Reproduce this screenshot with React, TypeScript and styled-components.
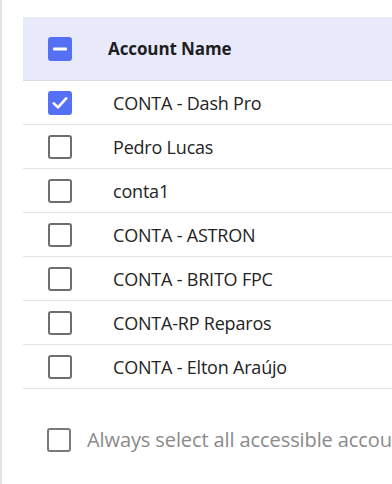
import React from "react";
import styled, { createGlobalStyle } from "styled-components";

const Global = createGlobalStyle`
  html, body { margin: 0; padding: 0; background: #ffffff; }
  body { font-family: "Open Sans", "Noto Sans", sans-serif; }
  * { box-sizing: border-box; }
`;

const Panel = styled.div`
  width: 392px;
  height: 484px;
  overflow: hidden;
  border-left: 2px solid #e4e4e4;
  padding: 17px 0 0 21px;
  background: #fff;
`;

const Table = styled.div`
  display: flex;
  flex-direction: column;
  width: 420px;
`;

const HeaderRow = styled.div`
  display: flex;
  align-items: center;
  height: 64px;
  background: #e8eafc;
  border-bottom: 1px solid #dcdde6;
`;

const Row = styled.div`
  display: flex;
  align-items: center;
  height: 44px;
  border-bottom: 1px solid #e2e2e2;
`;

const BoxCell = styled.div`
  width: 85px;
  flex-shrink: 0;
  padding-left: 25px;
  display: flex;
  align-items: center;
`;

const HeaderText = styled.div`
  font-size: 17px;
  font-weight: 700;
  color: #1f1f1f;
  letter-spacing: -0.1px;
`;

const NameText = styled.div`
  padding-left: 5px;
  font-size: 18px;
  color: #242424;
  white-space: nowrap;
  letter-spacing: -0.2px;
`;

const Box = styled.div<{ $on?: boolean; $muted?: boolean }>`
  width: 24px;
  height: 24px;
  flex-shrink: 0;
  border-radius: 3px;
  display: flex;
  align-items: center;
  justify-content: center;
  background: ${(p) => (p.$on ? "#5670f5" : "#fff")};
  border: ${(p) => (p.$on ? "none" : `2px solid ${p.$muted ? "#7a7a7a" : "#6e6e6e"}`)};
`;

const Footer = styled.div`
  display: flex;
  align-items: center;
  gap: 16px;
  margin-top: 37px;
  padding-left: 24px;
  white-space: nowrap;
`;

const FooterText = styled.div`
  font-size: 20px;
  color: #8a8a8a;
  letter-spacing: -0.1px;
`;

const Dash = () => (
  <svg width="14" height="4" viewBox="0 0 14 4">
    <rect x="0" y="0.5" width="14" height="3" rx="1" fill="#fff" />
  </svg>
);

const Check = () => (
  <svg width="16" height="14" viewBox="0 0 16 14">
    <path d="M1.8 7.4 L6 11.4 L14.2 2.4" fill="none" stroke="#fff" strokeWidth="2.6" strokeLinecap="round" strokeLinejoin="round" />
  </svg>
);

const accounts = [
  { name: "CONTA - Dash Pro", on: true },
  { name: "Pedro Lucas", on: false },
  { name: "conta1", on: false },
  { name: "CONTA - ASTRON", on: false },
  { name: "CONTA - BRITO FPC", on: false },
  { name: "CONTA-RP Reparos", on: false },
  { name: "CONTA - Elton Araújo", on: false },
];

export default function App() {
  return (
    <>
      <Global />
      <Panel>
        <Table>
          <HeaderRow>
            <BoxCell>
              <Box $on>
                <Dash />
              </Box>
            </BoxCell>
            <HeaderText>Account Name</HeaderText>
          </HeaderRow>
          {accounts.map((a) => (
            <Row key={a.name}>
              <BoxCell>
                <Box $on={a.on}>{a.on && <Check />}</Box>
              </BoxCell>
              <NameText>{a.name}</NameText>
            </Row>
          ))}
        </Table>
        <Footer>
          <Box $muted />
          <FooterText>Always select all accessible accounts</FooterText>
        </Footer>
      </Panel>
    </>
  );
}
